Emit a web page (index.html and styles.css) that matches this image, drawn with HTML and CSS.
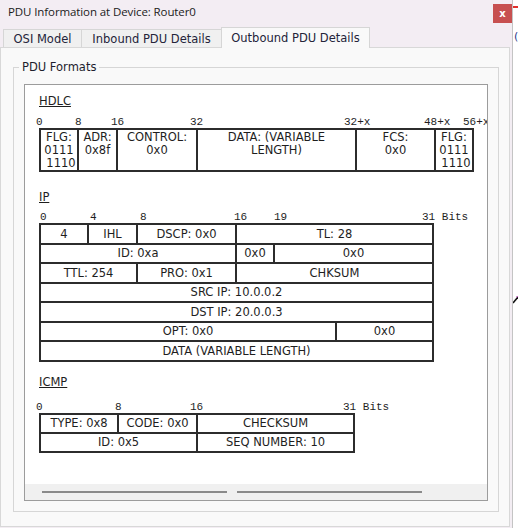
FILE: index.html
```html
<!DOCTYPE html>
<html>
<head>
<meta charset="utf-8">
<title>PDU Information at Device: Router0</title>
<link rel="stylesheet" href="styles.css">
</head>
<body>
<div class="screen">
  <div class="window">
    <div class="titlebar">
      <span class="title">PDU Information at Device: Router0</span>
      <span class="close">x</span>
    </div>
    <div class="tabs">
      <div class="tab tab-osi">OSI Model</div>
      <div class="tab tab-in">Inbound PDU Details</div>
      <div class="tab tab-out active">Outbound PDU Details</div>
    </div>
    <div class="panel">
      <div class="group">
        <span class="legend">PDU Formats</span>
        <div class="scrollbox">
          <div class="content">
            <div class="sec-label">HDLC</div>
            <div class="ticks ticks-hdlc">
              <span style="left:-3px">0</span>
              <span style="left:36px">8</span>
              <span style="left:72px">16</span>
              <span style="left:151px">32</span>
              <span style="left:305px">32+x</span>
              <span style="left:385px">48+x</span>
              <span style="left:424px">56+x</span>
            </div>
            <div class="pdu hdlc">
              <div class="cell">FLG:<br>0111<br><span class="shift">1110</span></div>
              <div class="cell">ADR:<br>0x8f</div>
              <div class="cell">CONTROL:<br>0x0</div>
              <div class="cell">DATA: (VARIABLE<br>LENGTH)</div>
              <div class="cell">FCS:<br>0x0</div>
              <div class="cell">FLG:<br>0111<br><span class="shift">1110</span></div>
            </div>

            <div class="sec-label sec-ip">IP</div>
            <div class="ticks ticks-ip">
              <span style="left:1px">0</span>
              <span style="left:51px">4</span>
              <span style="left:101px">8</span>
              <span style="left:195px">16</span>
              <span style="left:235px">19</span>
              <span style="left:383px">31 Bits</span>
            </div>
            <div class="pdu ip">
              <div class="cell">4</div>
              <div class="cell">IHL</div>
              <div class="cell">DSCP: 0x0</div>
              <div class="cell span-4-7">TL: 28</div>
              <div class="cell span-1-4">ID: 0xa</div>
              <div class="cell">0x0</div>
              <div class="cell span-5-7">0x0</div>
              <div class="cell span-1-3">TTL: 254</div>
              <div class="cell">PRO: 0x1</div>
              <div class="cell span-4-7">CHKSUM</div>
              <div class="cell span-all">SRC IP: 10.0.0.2</div>
              <div class="cell span-all">DST IP: 20.0.0.3</div>
              <div class="cell span-1-6">OPT: 0x0</div>
              <div class="cell">0x0</div>
              <div class="cell span-all">DATA (VARIABLE LENGTH)</div>
            </div>

            <div class="sec-label sec-icmp">ICMP</div>
            <div class="ticks ticks-icmp">
              <span style="left:-3px">0</span>
              <span style="left:76px">8</span>
              <span style="left:151px">16</span>
              <span style="left:304px">31 Bits</span>
            </div>
            <div class="pdu icmp">
              <div class="cell">TYPE: 0x8</div>
              <div class="cell">CODE: 0x0</div>
              <div class="cell">CHECKSUM</div>
              <div class="cell span-1-3">ID: 0x5</div>
              <div class="cell">SEQ NUMBER: 10</div>
            </div>
          </div>
          <div class="hscroll">
            <span class="thumb"></span>
            <span class="thumb"></span>
          </div>
        </div>
      </div>
    </div>
  </div>
  <div class="behind">
    <span class="red-mark"></span>
    <span class="glyph-mark">(</span>
    <svg class="cursor-mark" width="5" height="8" viewBox="0 0 5 8"><path d="M0 7 L5 1" stroke="#111" stroke-width="1.6"/><path d="M3 1 L5 0.5" stroke="#c060c0" stroke-width="1"/></svg>
  </div>
</div>
</body>
</html>
```

FILE: styles.css
```css
html, body {
  margin: 0;
  padding: 0;
  background: #ffffff;
}

.screen {
  width: 518px;
  height: 528px;
  display: flex;
  overflow: hidden;
  background: #ffffff;
}

.window {
  width: 513px;
  height: 528px;
  flex: none;
  box-sizing: border-box;
  border-right: 1px solid #c4c4c4;
  background: #f3edf3;
  display: flex;
  flex-direction: column;
}

.titlebar {
  height: 27px;
  flex: none;
  display: flex;
  align-items: flex-start;
}

.title {
  margin: 5px 0 0 8px;
  font-family: "Open Sans", "Noto Sans", sans-serif;
  font-size: 11.5px;
  letter-spacing: -0.1px;
  line-height: 14px;
  color: #1b1b1b;
}

.close {
  margin-left: auto;
  margin-top: 4px;
  width: 19px;
  height: 19px;
  background: #c75050;
  color: #ffffff;
  font-family: "DejaVu Sans", sans-serif;
  font-size: 10px;
  font-weight: bold;
  line-height: 19px;
  text-align: center;
}

.tabs {
  height: 20px;
  flex: none;
  display: flex;
  align-items: flex-end;
  padding-left: 3px;
  position: relative;
  z-index: 1;
}

.tab {
  box-sizing: border-box;
  height: 18px;
  border: 1px solid #d6d6d6;
  border-bottom: none;
  background: #f0f0f0;
  display: flex;
  align-items: center;
  justify-content: center;
  font-family: "DejaVu Sans", sans-serif;
  font-size: 11.5px;
  color: #24243a;
  white-space: nowrap;
}

.tab + .tab {
  margin-left: -1px;
}

.tab-osi { width: 79px; }
.tab-in { width: 141px; }
.tab-out { width: 149px; }

.tab.active {
  height: 21px;
  margin-bottom: -1px;
  background: #f9f9f9;
  padding-bottom: 1px;
}

.panel {
  box-sizing: border-box;
  width: 510px;
  height: 480px;
  flex: none;
  border: 1px solid #d8d8d8;
  background: #f9f9f9;
}

.group {
  position: relative;
  box-sizing: border-box;
  width: 486px;
  height: 445px;
  margin: 19px 0 0 12px;
  padding: 16px 10px 10px 10px;
  border: 1px solid #d6d6d6;
}

.legend {
  position: absolute;
  left: 5px;
  top: -8px;
  padding: 0 3px;
  background: #f9f9f9;
  font-family: "DejaVu Sans", sans-serif;
  font-size: 11.5px;
  line-height: 14px;
  color: #1e1e2e;
}

.scrollbox {
  box-sizing: border-box;
  width: 464px;
  height: 417px;
  border: 1px solid #9c9c9c;
  background: #ffffff;
  display: flex;
  flex-direction: column;
  overflow: hidden;
}

.content {
  flex: 1;
  padding: 9px 0 0 14px;
  overflow: hidden;
}

.hscroll {
  height: 16px;
  flex: none;
  background: #f0f0f0;
  display: flex;
  align-items: center;
  gap: 10px;
  padding-left: 17px;
}

.thumb {
  width: 185px;
  height: 2px;
  background: #8a8a8a;
}

.sec-label {
  font-family: "DejaVu Sans", sans-serif;
  font-size: 11.5px;
  line-height: 14px;
  height: 14px;
  color: #1e1e1e;
  text-decoration: underline;
}

.sec-ip { margin-top: 18px; }
.sec-icmp { margin-top: 13px; }

.ticks {
  position: relative;
  height: 12px;
  font-family: "Liberation Mono", monospace;
  font-size: 11px;
  line-height: 12px;
  color: #1e1e1e;
  white-space: pre;
}

.ticks span {
  position: absolute;
  top: 0;
}

.ticks-hdlc { margin-top: 8px; }
.ticks-ip { margin-top: 7px; }
.ticks-icmp { margin-top: 12px; }

.pdu {
  display: grid;
  width: max-content;
  gap: 2px;
  padding: 2px;
  background: #2c2c2c;
}

.cell {
  background: #ffffff;
  display: flex;
  align-items: center;
  justify-content: center;
  text-align: center;
  font-family: "DejaVu Sans", sans-serif;
  font-size: 11.5px;
  color: #1e1e1e;
  white-space: nowrap;
  overflow: hidden;
}

.hdlc {
  grid-template-columns: 36px 37px 78px 157px 77px 36px;
  grid-template-rows: 40px;
}

.hdlc .cell {
  display: block;
  padding-top: 1px;
  line-height: 13px;
}

.shift {
  padding-left: 4px;
}

.ip {
  grid-template-columns: 46px 47px 97px 36px 60px 95px;
  grid-auto-rows: 17.5px;
}

.icmp {
  grid-template-columns: 76px 77px 155px;
  grid-auto-rows: 17px;
}

.span-all { grid-column: 1 / -1; }
.span-4-7 { grid-column: 4 / 7; }
.span-1-4 { grid-column: 1 / 4; }
.span-5-7 { grid-column: 5 / 7; }
.span-1-3 { grid-column: 1 / 3; }
.span-1-6 { grid-column: 1 / 6; }

.behind {
  position: relative;
  flex: 1;
  background: #ffffff;
}

.red-mark {
  position: absolute;
  left: 0;
  top: 6px;
  width: 6px;
  height: 2px;
  background: #e0302c;
}

.glyph-mark {
  position: absolute;
  left: 1px;
  top: 31px;
  font-family: "DejaVu Sans", sans-serif;
  font-size: 11px;
  line-height: 12px;
  color: #2a3a8a;
}

.cursor-mark {
  position: absolute;
  left: 0;
  top: 296px;
}
```
